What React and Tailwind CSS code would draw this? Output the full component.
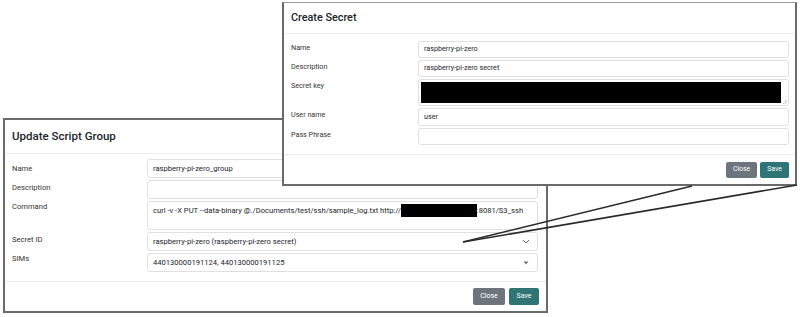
import React from 'react';

const font = { fontFamily: 'Roboto, "Liberation Sans", Arial, sans-serif' };

const Chevron = () => (
  <svg width="8" height="5" viewBox="0 0 8 5" className="text-[#666]">
    <path d="M1 1 L4 4 L7 1" fill="none" stroke="currentColor" strokeWidth="1" />
  </svg>
);

const Caret = () => (
  <svg width="6" height="4" viewBox="0 0 6 4" className="text-[#777]">
    <path d="M0.5 0.5 L5.5 0.5 L3 3.5 Z" fill="currentColor" />
  </svg>
);

const Redacted = ({ className }) => <span className={`inline-block bg-black ${className}`} />;

const UpdateScriptGroup = () => (
  <div className="absolute left-[3px] top-[118px] w-[545px] h-[195px] bg-white border-2 border-[#6a6a6a] flex flex-col">
    {/* Header */}
    <div className="h-[34px] shrink-0 flex items-center pl-[7px] border-b border-[#ececec]">
      <span className="text-[11.5px] font-medium text-[#212529]">Update Script Group</span>
    </div>

    {/* Body */}
    <div className="flex-1 pl-[7px] pr-[8px] pt-[5px] flex flex-col gap-[2px] text-[7.6px] text-[#333]">
      <div className="flex items-start">
        <span className="w-[135px] pt-[4px]">Name</span>
        <div className="flex-1 h-[19px] border border-[#e0e0e0] rounded-[3px] px-[5px] flex items-center text-[#212529]">
          raspberry-pi-zero_group
        </div>
      </div>
      <div className="flex items-start">
        <span className="w-[135px] pt-[2px]">Description</span>
        <div className="flex-1 h-[19px] border border-[#e0e0e0] rounded-[3px]" />
      </div>
      <div className="flex items-start">
        <span className="w-[135px] pt-[0px]">Command</span>
        <div className="flex-1 h-[29px] border border-[#e0e0e0] rounded-[3px] px-[5px] pt-[3px] text-[#212529] whitespace-nowrap flex items-start">
          <span>curl -v -X PUT --data-binary @./Documents/test/ssh/sample_log.txt http://</span>
          <Redacted className="w-[76px] h-[13px] -mt-[1px]" />
          <span>:8081/S3_ssh</span>
        </div>
      </div>
      <div className="flex items-start">
        <span className="w-[135px] pt-[2px]">Secret ID</span>
        <div className="flex-1 h-[19px] border border-[#e0e0e0] rounded-[3px] pl-[5px] pr-[7px] flex items-center justify-between text-[#212529]">
          <span>raspberry-pi-zero (raspberry-pi-zero secret)</span>
          <Chevron />
        </div>
      </div>
      <div className="flex items-start">
        <span className="w-[135px] pt-[0px]">SIMs</span>
        <div className="flex-1 h-[19px] border border-[#e0e0e0] rounded-[3px] pl-[5px] pr-[8px] flex items-center justify-between text-[#212529]">
          <span>440130000191124, 440130000191125</span>
          <Caret />
        </div>
      </div>
    </div>

    {/* Footer */}
    <div className="h-[30px] shrink-0 border-t border-[#ececec] flex items-center justify-end gap-[4px] pr-[7px]">
      <button className="w-[32px] h-[17px] rounded-[2px] bg-[#6c757d] text-white text-[7px]">Close</button>
      <button className="w-[30px] h-[17px] rounded-[2px] bg-[#2f7575] text-white text-[7px]">Save</button>
    </div>
  </div>
);

const CreateSecret = () => (
  <div className="absolute left-[282px] top-[2px] w-[515px] h-[184px] bg-white border-2 border-t border-[#6a6a6a] border-t-[#9a9a9a] flex flex-col">
    {/* Header */}
    <div className="h-[31px] shrink-0 flex items-center pl-[7px] border-b border-[#ececec]">
      <span className="text-[10.8px] font-medium text-[#212529]">Create Secret</span>
    </div>

    {/* Body */}
    <div className="flex-1 pl-[7px] pr-[6px] pt-[7px] flex flex-col gap-[2px] text-[7.2px] text-[#333]">
      <div className="flex items-start">
        <span className="w-[127px] pt-[2px]">Name</span>
        <div className="flex-1 h-[17px] border border-[#e0e0e0] rounded-[3px] px-[5px] flex items-center text-[#212529]">
          raspberry-pi-zero
        </div>
      </div>
      <div className="flex items-start">
        <span className="w-[127px] pt-[2px]">Description</span>
        <div className="flex-1 h-[17px] border border-[#e0e0e0] rounded-[3px] px-[5px] flex items-center text-[#212529]">
          raspberry-pi-zero secret
        </div>
      </div>
      <div className="flex items-start">
        <span className="w-[127px] pt-[2px]">Secret key</span>
        <div className="relative flex-1 h-[27px] border border-[#e0e0e0] rounded-[3px] pl-[2px] pr-[7px] pt-[2px]">
          <Redacted className="w-full h-[21px] block" />
          <svg width="4" height="4" viewBox="0 0 4 4" className="absolute right-[1px] bottom-[1px] text-[#aaa]">
            <path d="M0 4 L4 0 M2 4 L4 2" stroke="currentColor" strokeWidth="0.6" />
          </svg>
        </div>
      </div>
      <div className="flex items-start">
        <span className="w-[127px] pt-[2px]">User name</span>
        <div className="flex-1 h-[18px] border border-[#e0e0e0] rounded-[3px] px-[5px] flex items-center text-[#212529]">
          user
        </div>
      </div>
      <div className="flex items-start">
        <span className="w-[127px] pt-[2px]">Pass Phrase</span>
        <div className="flex-1 h-[17px] border border-[#e0e0e0] rounded-[3px]" />
      </div>
    </div>

    {/* Footer */}
    <div className="h-[30px] shrink-0 border-t border-[#ececec] flex items-center justify-end gap-[3px] pr-[6px]">
      <button className="w-[31px] h-[16px] rounded-[2px] bg-[#6c757d] text-white text-[6.8px]">Close</button>
      <button className="w-[29px] h-[16px] rounded-[2px] bg-[#2f7575] text-white text-[6.8px]">Save</button>
    </div>
  </div>
);

export default function App() {
  return (
    <div className="relative w-[800px] h-[317px] bg-white overflow-hidden" style={font}>
      <UpdateScriptGroup />
      <CreateSecret />

      {/* Callout lines */}
      <svg className="absolute inset-0 pointer-events-none" width="800" height="317" viewBox="0 0 800 317">
        <line x1="463" y1="242" x2="692" y2="186" stroke="#2a2a2a" strokeWidth="1.6" />
        <line x1="463" y1="242" x2="797" y2="185" stroke="#2a2a2a" strokeWidth="1.6" />
      </svg>
    </div>
  );
}
